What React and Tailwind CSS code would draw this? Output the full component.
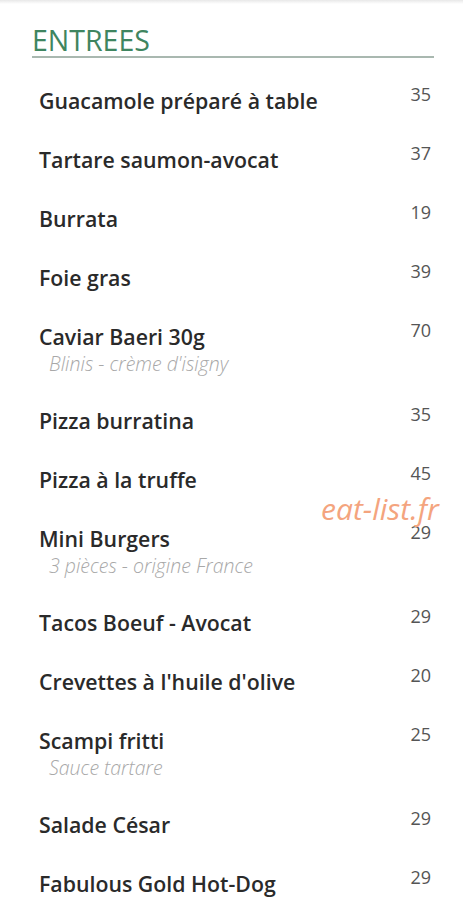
import React from "react";

const items = [
  { name: "Guacamole préparé à table", price: "35" },
  { name: "Tartare saumon-avocat", price: "37" },
  { name: "Burrata", price: "19" },
  { name: "Foie gras", price: "39" },
  { name: "Caviar Baeri 30g", price: "70", desc: "Blinis - crème d'isigny" },
  { name: "Pizza burratina", price: "35" },
  { name: "Pizza à la truffe", price: "45" },
  { name: "Mini Burgers", price: "29", desc: "3 pièces - origine France" },
  { name: "Tacos Boeuf - Avocat", price: "29" },
  { name: "Crevettes à l'huile d'olive", price: "20" },
  { name: "Scampi fritti", price: "25", desc: "Sauce tartare" },
  { name: "Salade César", price: "29" },
  { name: "Fabulous Gold Hot-Dog", price: "29" },
];

export default function App() {
  return (
    <div
      className="relative w-[463px] h-[903px] overflow-hidden bg-white"
      style={{ fontFamily: '"Open Sans", sans-serif' }}
    >
      <div className="h-[4px] bg-gradient-to-b from-[#e8e8e8] to-white" />
      <div className="px-[32px] pt-[20px]">
        <div className="text-[28.5px] leading-[32px] font-normal text-[#3f8560]">
          ENTREES
        </div>
        <div className="h-[2px] bg-[#a9b8b0] mr-[-3px]" />
        <div className="flex flex-col pt-[29px] gap-[31px]">
          {items.map((it) => (
            <div key={it.name} className="flex justify-between pl-[7px]">
              <div className="flex flex-col">
                <div className="text-[21.3px] leading-[28px] font-semibold text-[#2a2a2a]">
                  {it.name}
                </div>
                {it.desc && (
                  <div className="text-[19.5px] leading-[24px] italic font-light text-[#a8a8a8] pl-[10px] mt-[1px]">
                    {it.desc}
                  </div>
                )}
              </div>
              <div className="text-[18px] leading-[20px] text-[#555] mt-[-3px]">
                {it.price}
              </div>
            </div>
          ))}
        </div>
      </div>
      <div className="absolute left-[321px] top-[490px] text-[30px] italic font-normal text-[#f4a47e] leading-[38px]">
        eat-list.fr
      </div>
    </div>
  );
}
